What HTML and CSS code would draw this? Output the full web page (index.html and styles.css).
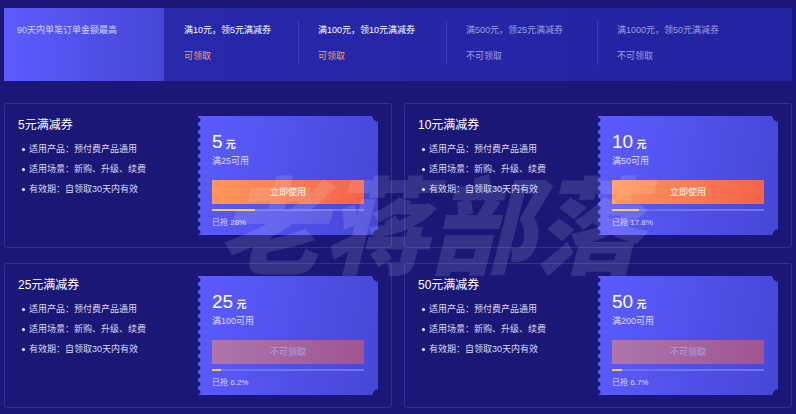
FILE: index.html
```html
<!DOCTYPE html>
<html lang="zh-CN">
<head>
    <meta charset="UTF-8">
    <meta name="viewport" content="width=device-width, initial-scale=1.0">
    <title>满减券</title>
    <link rel="stylesheet" href="styles.css">
</head>
<body>
    <section class="rules">
        <div class="rules-title">90天内单笔订单金额最高</div>
        <ul class="levels">
            <li class="level active">
                <p>满10元，领5元满减券</p>
                <p class="status">可领取</p>
            </li>
            <li class="level active">
                <p>满100元，领10元满减券</p>
                <p class="status">可领取</p>
            </li>
            <li class="level">
                <p>满500元，领25元满减券</p>
                <p class="status">不可领取</p>
            </li>
            <li class="level">
                <p>满1000元，领50元满减券</p>
                <p class="status">不可领取</p>
            </li>
        </ul>
    </section>

    <main class="coupons">
        <article class="coupon">
            <div class="info">
                <h2>5元满减券</h2>
                <ul>
                    <li>适用产品：预付费产品通用</li>
                    <li>适用场景：新购、升级、续费</li>
                    <li>有效期：自领取30天内有效</li>
                </ul>
            </div>
            <div class="ticket">
                <p class="amount">5 <span>元</span></p>
                <p class="limit">满25可用</p>
                <button type="button" class="btn">立即使用</button>
                <progress class="bar" id="bar5" value="28" max="100"></progress>
                <label class="taken" for="bar5">已抢 28%</label>
            </div>
        </article>

        <article class="coupon">
            <div class="info">
                <h2>10元满减券</h2>
                <ul>
                    <li>适用产品：预付费产品通用</li>
                    <li>适用场景：新购、升级、续费</li>
                    <li>有效期：自领取30天内有效</li>
                </ul>
            </div>
            <div class="ticket">
                <p class="amount">10 <span>元</span></p>
                <p class="limit">满50可用</p>
                <button type="button" class="btn">立即使用</button>
                <progress class="bar" id="bar10" value="17.8" max="100"></progress>
                <label class="taken" for="bar10">已抢 17.8%</label>
            </div>
        </article>

        <article class="coupon">
            <div class="info">
                <h2>25元满减券</h2>
                <ul>
                    <li>适用产品：预付费产品通用</li>
                    <li>适用场景：新购、升级、续费</li>
                    <li>有效期：自领取30天内有效</li>
                </ul>
            </div>
            <div class="ticket">
                <p class="amount">25 <span>元</span></p>
                <p class="limit">满100可用</p>
                <button type="button" class="btn" disabled>不可领取</button>
                <progress class="bar" id="bar25" value="6.2" max="100"></progress>
                <label class="taken" for="bar25">已抢 6.2%</label>
            </div>
        </article>

        <article class="coupon">
            <div class="info">
                <h2>50元满减券</h2>
                <ul>
                    <li>适用产品：预付费产品通用</li>
                    <li>适用场景：新购、升级、续费</li>
                    <li>有效期：自领取30天内有效</li>
                </ul>
            </div>
            <div class="ticket">
                <p class="amount">50 <span>元</span></p>
                <p class="limit">满200可用</p>
                <button type="button" class="btn" disabled>不可领取</button>
                <progress class="bar" id="bar50" value="6.7" max="100"></progress>
                <label class="taken" for="bar50">已抢 6.7%</label>
            </div>
        </article>

        <div class="watermark">老蒋部落</div>
    </main>
</body>
</html>
```
FILE: styles.css
```css
* {
    box-sizing: border-box;
    margin: 0;
    padding: 0;
}
body {
    padding: 8px 4px;
    background-color: #1a1777;
    color: #fff;
    font-family: "Liberation Sans", "Noto Sans CJK SC", sans-serif;
    font-size: 9px;
    line-height: 18px;
}
ul {
    list-style: none;
}

/* top bar */
.rules {
    display: flex;
    margin-bottom: 22px;
    background: linear-gradient(90deg, #2a2aae, #2223a0);
}
.rules-title {
    flex: 0 0 160px;
    padding: 13px;
    background: linear-gradient(90deg, #5c5cff, #4646d6);
    color: #d4d3fb;
}
.levels {
    flex: 1;
    display: grid;
    grid-template-columns: 134fr 148fr 151fr 195fr;
    padding: 13px 0 16px;
}
.level {
    padding-left: 19px;
    border-left: 1px solid #3c3bb9;
    color: #a09ee0;
    white-space: nowrap;
}
.level:first-child {
    border-left-color: transparent;
}
.level.active {
    color: #fff;
}
.status {
    margin-top: 8px;
}
.active .status {
    color: #f7a05c;
}

/* coupons */
.coupons {
    position: relative;
    display: grid;
    grid-template-columns: 1fr 1fr;
    gap: 15px 12px;
}
.coupon {
    display: flex;
    justify-content: space-between;
    padding: 12px 13px;
    border: 1px solid #302da0;
    border-radius: 3px;
}
.info h2 {
    margin-bottom: 5px;
    font-size: 12px;
    font-weight: 400;
    line-height: 18px;
}
.info li {
    position: relative;
    padding-left: 11px;
    color: #dddcf4;
    line-height: 20px;
}
.info li::before {
    content: "";
    position: absolute;
    left: 4px;
    top: 9px;
    width: 3px;
    height: 3px;
    border-radius: 50%;
    background-color: #fff;
}
.ticket {
    flex: 0 0 180px;
    height: 119px;
    padding: 16px 14px 0;
    background:
        radial-gradient(circle at 0 50%, #1a1777 2px, transparent 3px) 0 0 / 4px 8px repeat-y,
        radial-gradient(circle at 100% 0, #1a1777 5px, transparent 6px),
        radial-gradient(circle at 100% 100%, #1a1777 5px, transparent 6px),
        linear-gradient(100deg, #5c5cff, #4646d6);
}
.amount {
    font-size: 19px;
    line-height: 20px;
}
.amount span {
    margin-left: -2px;
    font-size: 10px;
    font-weight: 700;
    line-height: 1;
}
.limit {
    color: #dddcff;
}
.btn {
    display: block;
    width: 100%;
    height: 24px;
    margin: 10px 0 5px;
    border: none;
    background: linear-gradient(100deg, #ff985c, #f3624b);
    color: #fff;
    font: inherit;
    cursor: pointer;
}
.btn:disabled {
    background: linear-gradient(100deg, #ad76ac, #9f5490);
    color: #a9a0ec;
    cursor: default;
}
.bar {
    display: block;
    width: 100%;
    height: 2px;
    border: none;
    appearance: none;
}
.bar::-webkit-progress-bar {
    background-color: #7473e8;
}
.bar::-webkit-progress-value {
    background-color: #f5cb6e;
}
.taken {
    display: block;
    margin-top: 3px;
    color: #dddcff;
    font-size: 8px;
}

.watermark {
    position: absolute;
    left: 54%;
    top: 126px;
    transform: translate(-50%, -50%);
    color: rgba(255, 255, 255, 0.12);
    font-size: 106px;
    font-style: italic;
    font-weight: 900;
    line-height: 1;
    white-space: nowrap;
    pointer-events: none;
}
```
